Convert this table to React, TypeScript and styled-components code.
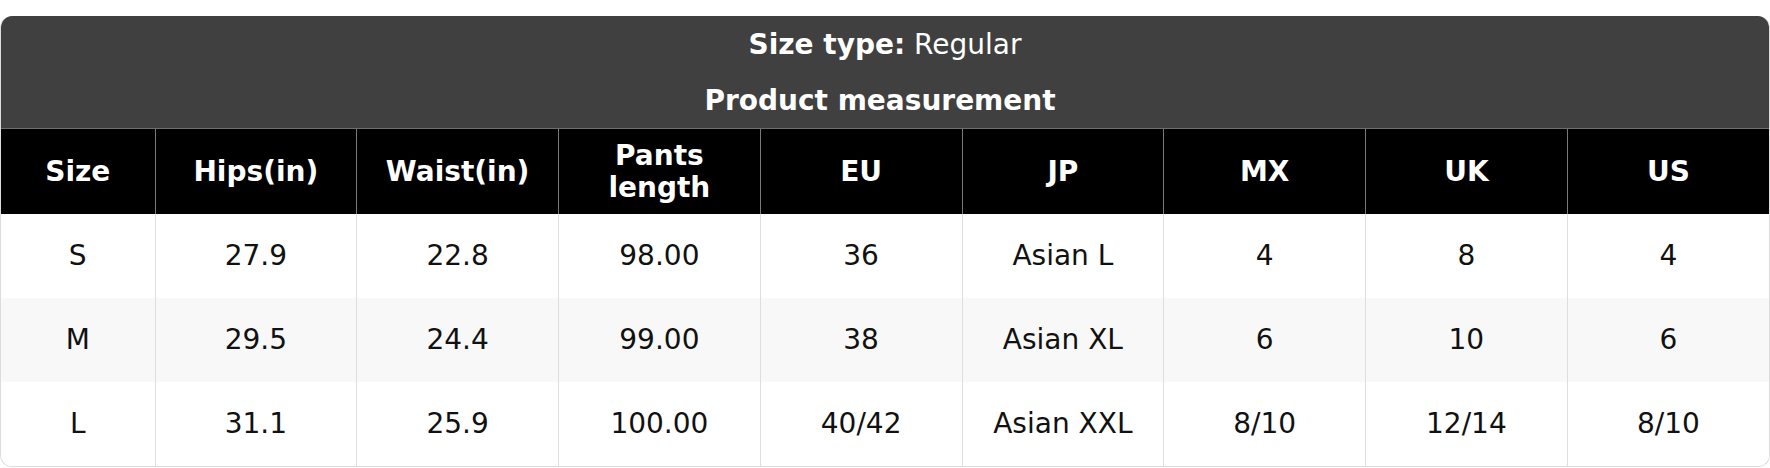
import React from "react";
import styled, { createGlobalStyle } from "styled-components";

const GlobalStyle = createGlobalStyle`
  html, body {
    margin: 0;
    padding: 0;
    background: #ffffff;
  }
  body {
    font-family: "DejaVu Sans", "Liberation Sans", sans-serif;
  }
`;

const Page = styled.div`
  padding-top: 16px;
`;

const Card = styled.div`
  border: 1px solid #dcdcdc;
  border-top: none;
  border-radius: 12px;
  overflow: hidden;
  background: #ffffff;
`;

const Banner = styled.div`
  background: #404040;
  color: #ffffff;
  text-align: center;
`;

const BannerLine = styled.div<{ $bold?: boolean }>`
  height: 56px;
  display: flex;
  align-items: center;
  justify-content: center;
  font-size: 28px;
  font-weight: ${(p) => (p.$bold ? 700 : 400)};
  gap: 0.32em;
  padding-right: ${(p) => (p.$bold ? "10px" : "0")};
`;

const Strong = styled.span`
  font-weight: 700;
`;

const Table = styled.table`
  width: 100%;
  border-collapse: collapse;
  table-layout: fixed;
  font-size: 28px;
`;

const HeadRow = styled.tr`
  height: 85px;
`;

const HeadCell = styled.th`
  background: #000000;
  color: #ffffff;
  font-weight: 700;
  text-align: center;
  vertical-align: middle;
  padding: 2px 12px 0;
  line-height: 1.16;
  border-top: 1px solid #6e6e6e;
  border-left: 1px solid #7a7a7a;
  &:first-child {
    border-left: none;
  }
`;

const BodyRow = styled.tr<{ $striped?: boolean }>`
  height: 84px;
  background: ${(p) => (p.$striped ? "#f8f8f8" : "#ffffff")};
`;

const Cell = styled.td`
  color: #111111;
  text-align: center;
  vertical-align: middle;
  padding: 0 12px;
  border-left: 1px solid #dedede;
  &:first-child {
    border-left: none;
  }
`;

const columns = [
  "Size",
  "Hips(in)",
  "Waist(in)",
  "Pants length",
  "EU",
  "JP",
  "MX",
  "UK",
  "US",
];

const rows = [
  ["S", "27.9", "22.8", "98.00", "36", "Asian L", "4", "8", "4"],
  ["M", "29.5", "24.4", "99.00", "38", "Asian XL", "6", "10", "6"],
  ["L", "31.1", "25.9", "100.00", "40/42", "Asian XXL", "8/10", "12/14", "8/10"],
];

const App: React.FC = () => {
  return (
    <Page>
      <GlobalStyle />
      <Card>
        <Banner>
          <BannerLine>
            <Strong>Size type:</Strong>
            <span>Regular</span>
          </BannerLine>
          <BannerLine $bold>Product measurement</BannerLine>
        </Banner>
        <Table>
          <colgroup>
            <col style={{ width: 154 }} />
            {columns.slice(1).map((c) => (
              <col key={c} />
            ))}
          </colgroup>
          <thead>
            <HeadRow>
              {columns.map((c) => (
                <HeadCell key={c}>{c}</HeadCell>
              ))}
            </HeadRow>
          </thead>
          <tbody>
            {rows.map((row, i) => (
              <BodyRow key={row[0]} $striped={i % 2 === 1}>
                {row.map((value, j) => (
                  <Cell key={j}>{value}</Cell>
                ))}
              </BodyRow>
            ))}
          </tbody>
        </Table>
      </Card>
    </Page>
  );
};

export default App;
